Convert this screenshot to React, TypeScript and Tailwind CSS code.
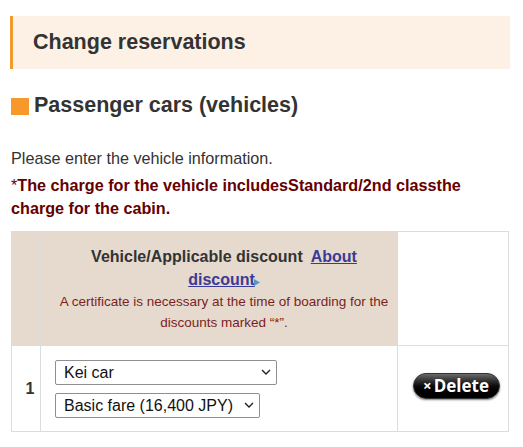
import React from "react";

function Chevron() {
  return (
    <svg width="10" height="6" viewBox="0 0 10 6" className="pointer-events-none absolute right-[6px] top-1/2 -translate-y-1/2">
      <path d="M1 1 L5 5 L9 1" fill="none" stroke="#222" strokeWidth="1.4" />
    </svg>
  );
}

function Select({ value, width }: { value: string; width: string }) {
  return (
    <div className={`relative ${width} h-[25px]`}>
      <select
        defaultValue={value}
        className="w-full h-full appearance-none border border-[#8f8f8f] rounded-[2px] bg-white pl-[8px] pr-[20px] text-[16px] leading-[23px] text-[#111] font-['Liberation_Sans',Arial,sans-serif] outline-none"
      >
        <option>{value}</option>
      </select>
      <Chevron />
    </div>
  );
}

export default function App() {
  return (
    <div className="w-[523px] h-[447px] bg-white overflow-hidden font-['Liberation_Sans',Arial,sans-serif] text-[#333] px-[10px]">
      <div className="mt-[16px] h-[53px] w-[500px] flex items-center border-l-[3px] border-[#f29a2e] bg-[#fdf1e6] pl-[20px]">
        <h1 className="text-[21.5px] font-bold leading-none text-[#333]">Change reservations</h1>
      </div>

      <div className="mt-[24px] h-[26px] flex items-center">
        <span className="ml-[1px] w-[18px] h-[17px] bg-[#f7982b]" />
        <h2 className="ml-[5px] text-[21.5px] font-bold leading-none text-[#333]">Passenger cars (vehicles)</h2>
      </div>

      <p className="mt-[28px] ml-[1px] text-[16.2px] leading-[22px] text-[#333]">Please enter the vehicle information.</p>

      <p className="mt-[5px] ml-[1px] w-[490px] text-[16.2px] leading-[22.5px] text-[#660000]">
        *<span className="font-bold">The charge for the vehicle includesStandard/2nd classthe charge for the cabin.</span>
      </p>

      <table className="mt-[12px] ml-[1px] w-[498px] border-collapse">
        <thead>
          <tr className="h-[114px]">
            <th className="w-[29px] bg-[#e6d9cd] border border-[#dcdcdc]" />
            <th className="w-[357px] bg-[#e6d9cd] border border-[#dcdcdc] pl-[15px] pr-[5px] py-[12px] text-center font-normal align-middle">
              <div className="text-[16px] leading-[23px] font-bold text-[#333]">
                Vehicle/Applicable discount
                <a href="#" className="ml-[8px] text-[#3b3a98] underline">About discount</a>
                <svg width="6" height="7" viewBox="0 0 6 7" className="inline-block -ml-[1px] align-[-1px]">
                  <path d="M0 0 L6 3.5 L0 7 Z" fill="#4a9bd0" />
                </svg>
              </div>
              <div className="text-[13.5px] leading-[21px] text-[#7a1f1f]">
                A certificate is necessary at the time of boarding for the discounts marked “*”.
              </div>
            </th>
            <th className="bg-white border border-[#dcdcdc]" />
          </tr>
        </thead>
        <tbody>
          <tr className="h-[86px]">
            <td className="border border-[#dcdcdc] pl-[8px] text-center text-[16px] font-bold text-[#333]">1</td>
            <td className="border border-[#dcdcdc] pl-[14px] py-[13px]">
              <div className="flex flex-col gap-[8px]">
                <Select value="Kei car" width="w-[222px]" />
                <Select value="Basic fare (16,400 JPY)" width="w-[205px]" />
              </div>
            </td>
            <td className="border border-[#dcdcdc]">
              <div className="flex items-center justify-center pl-[6px] mb-[6px]">
                <button className="flex items-center justify-center h-[26px] w-[87px] rounded-full border border-[#333] bg-gradient-to-b from-[#6a6a6a] via-[#0c0c0c] to-[#000] shadow-[0_1px_2px_rgba(0,0,0,0.5)] text-white font-bold font-['Open_Sans',sans-serif]">
                  <span className="text-[15px] leading-none mr-[2px]">×</span>
                  <span className="text-[17px] leading-none">Delete</span>
                </button>
              </div>
            </td>
          </tr>
        </tbody>
      </table>
    </div>
  );
}
